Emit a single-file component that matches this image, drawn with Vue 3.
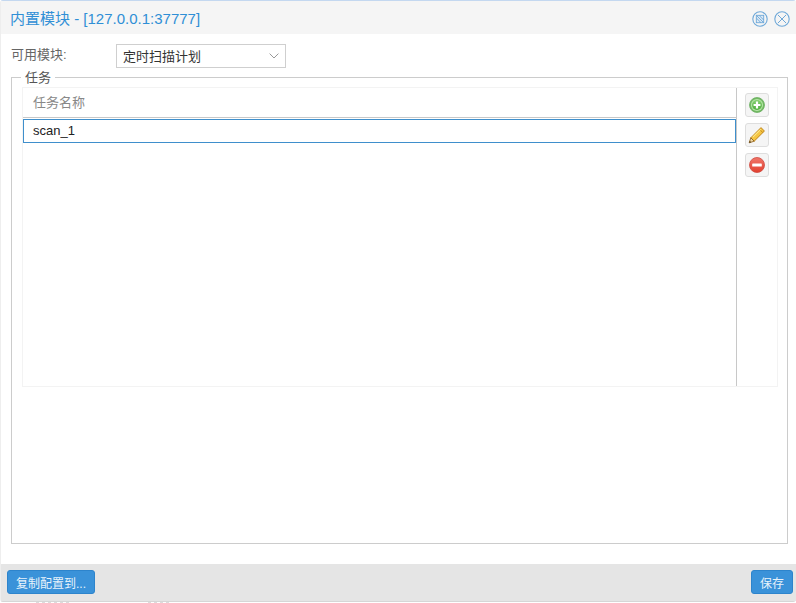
<script setup>
const title = '内置模块 - [127.0.0.1:37777]'
</script>

<template>
  <div class="page">
    <div class="window">
      <header class="head">
        <span class="title">{{ title }}</span>
        <span class="tools">
          <svg class="tool" viewBox="0 0 16 16" width="16" height="16">
            <circle cx="8" cy="8" r="7.2" fill="none" stroke="#6ea8d8" stroke-width="1.1" />
            <rect x="4.3" y="4.3" width="7.4" height="7.4" fill="#dbe9f6" stroke="#6ea8d8" stroke-width="0.9" />
            <path d="M4.3 4.3 11.7 11.7M7 4.3 11.7 9M4.3 7 9 11.7" stroke="#6ea8d8" stroke-width="0.9" fill="none" />
          </svg>
          <svg class="tool" viewBox="0 0 16 16" width="16" height="16">
            <circle cx="8" cy="8" r="7.2" fill="none" stroke="#6ea8d8" stroke-width="1.1" />
            <path d="M3.9 3.9 12.1 12.1M12.1 3.9 3.9 12.1" stroke="#6ea8d8" stroke-width="1" fill="none" />
          </svg>
        </span>
      </header>

      <main class="body">
        <div class="form-row">
          <label class="label">可用模块:</label>
          <div class="select">
            <span>定时扫描计划</span>
            <svg class="chevron" viewBox="0 0 10 6" width="10" height="6"><path d="M.6.6 5 5 9.4.6" fill="none" stroke="#999" stroke-width="1" /></svg>
          </div>
        </div>

        <section class="fieldset">
          <span class="legend">任务</span>
          <div class="grid">
            <div class="grid-main">
              <div class="grid-head">任务名称</div>
              <div class="grid-row">scan_1</div>
            </div>
            <div class="grid-side">
              <button class="icon-btn">
                <svg viewBox="0 0 16 16" width="16" height="16">
                  <defs>
                    <linearGradient id="g-add" x1="0" y1="0" x2="0" y2="1">
                      <stop offset="0" stop-color="#86d073" />
                      <stop offset="1" stop-color="#4fae3e" />
                    </linearGradient>
                  </defs>
                  <circle cx="8" cy="8" r="7.5" fill="#74bb66" stroke="#62a956" stroke-width="0.7" />
                  <circle cx="8" cy="8" r="6" fill="#b8e6a9" />
                  <circle cx="8" cy="8" r="5" fill="url(#g-add)" />
                  <path d="M8 4.6v6.8M4.6 8h6.8" stroke="#fff" stroke-width="2.2" />
                </svg>
              </button>
              <button class="icon-btn">
                <svg viewBox="0 0 18 18" width="18" height="18">
                  <path d="M13 1.6 16.4 5 6.2 15.2 2.8 11.8Z" fill="#f5c542" stroke="#b97a12" stroke-width="0.9" />
                  <path d="M2.8 11.8 1.2 16.8 6.2 15.2Z" fill="#f0d9a8" stroke="#8a5a10" stroke-width="0.8" />
                  <path d="M1.2 16.8 1.8 14.8 3.2 16.2Z" fill="#4a3310" />
                  <path d="M11.4 3.2 14.8 6.6" stroke="#b97a12" stroke-width="0.8" />
                  <path d="M12.8 3.2 4.8 11.2" stroke="#fbe78d" stroke-width="1.1" />
                </svg>
              </button>
              <button class="icon-btn">
                <svg viewBox="0 0 16 16" width="16" height="16">
                  <defs>
                    <linearGradient id="g-del" x1="0" y1="0" x2="0" y2="1">
                      <stop offset="0" stop-color="#f0766a" />
                      <stop offset="1" stop-color="#e2402f" />
                    </linearGradient>
                  </defs>
                  <circle cx="8" cy="8" r="7.5" fill="url(#g-del)" stroke="#cf4a40" stroke-width="0.8" />
                  <rect x="3.2" y="6.4" width="9.6" height="3.2" rx="0.6" fill="#fff" />
                </svg>
              </button>
            </div>
          </div>
        </section>
      </main>

      <footer class="foot">
        <button class="btn">复制配置到...</button>
        <button class="btn">保存</button>
      </footer>
    </div>
    <div class="under">
      <span class="speck speck-a"></span>
      <span class="speck speck-b"></span>
    </div>
  </div>
</template>

<style scoped>
.page {
  width: 796px;
  height: 603px;
  overflow: hidden;
  background: #fff;
  font-family: "Liberation Sans", "Noto Sans CJK SC", sans-serif;
  font-size: 13px;
}
.window {
  height: 602px;
  box-sizing: border-box;
  display: flex;
  flex-direction: column;
  border-top: 1px solid #c4d8f0;
  border-left: 1px solid #eeeeee;
  border-bottom: 1px solid #d6d6d6;
  border-radius: 3px;
}
.head {
  height: 33px;
  flex: none;
  box-sizing: border-box;
  background: #f5f5f5;
  display: flex;
  align-items: center;
  justify-content: space-between;
  padding: 2px 6px 0 9px;
}
.title {
  color: #2f8fd6;
  font-size: 15px;
  margin-top: -2px;
}
.tools {
  display: flex;
  gap: 6px;
}
.tool {
  display: block;
}
.body {
  flex: 1;
  display: flex;
  flex-direction: column;
  box-sizing: border-box;
  padding: 10px 8px 20px 10px;
  min-height: 0;
}
.form-row {
  display: flex;
  align-items: center;
  height: 24px;
  flex: none;
}
.label {
  width: 105px;
  color: #666;
  line-height: 22px;
  margin-top: -2px;
}
.select {
  width: 170px;
  height: 24px;
  box-sizing: border-box;
  border: 1px solid #cfcfcf;
  display: flex;
  align-items: center;
  justify-content: space-between;
  padding: 0 6px 2px;
  color: #333;
}
.chevron {
  margin: 2px 0 0;
}
.fieldset {
  position: relative;
  flex: 1;
  margin-top: 9px;
  border: 1px solid #cccccc;
  padding: 9px 9px 156px 10px;
  display: flex;
  min-height: 0;
}
.legend {
  position: absolute;
  top: -8px;
  left: 9px;
  padding: 0 4px;
  background: #fff;
  color: #555;
  line-height: 16px;
}
.grid {
  flex: 1;
  display: flex;
  border: 1px solid #f3f3f3;
}
.grid-main {
  flex: 1;
  border-right: 1px solid #c8c8c8;
}
.grid-head {
  height: 30px;
  box-sizing: border-box;
  border-bottom: 1px solid #c8c8c8;
  color: #888;
  padding-left: 10px;
  line-height: 29px;
}
.grid-row {
  height: 24px;
  box-sizing: border-box;
  margin-top: 1px;
  border: 1px solid #3f8fcc;
  padding-left: 9px;
  line-height: 22px;
  color: #222;
}
.grid-side {
  width: 40px;
  flex: none;
  box-sizing: border-box;
  padding: 5px 8px 0;
  display: flex;
  flex-direction: column;
  gap: 6px;
}
.icon-btn {
  width: 24px;
  height: 24px;
  padding: 0;
  box-sizing: border-box;
  border: 1px solid #dedede;
  border-radius: 3px;
  background: #f5f5f5;
  display: flex;
  align-items: center;
  justify-content: center;
}
.foot {
  height: 37px;
  flex: none;
  box-sizing: border-box;
  background: #e5e5e5;
  display: flex;
  align-items: flex-start;
  justify-content: space-between;
  padding: 6px 3px 0 6px;
}
.btn {
  height: 24px;
  box-sizing: border-box;
  padding: 0 8px;
  border: 1px solid #2d84cc;
  border-radius: 3px;
  background: #3a92d9;
  color: #e8f2fb;
  font-family: inherit;
  font-size: 12px;
}
.under {
  height: 1px;
  display: flex;
}
.speck {
  height: 1px;
  background: repeating-linear-gradient(90deg, #dcdcdc 0 3px, #fff 3px 6px);
}
.speck-a {
  width: 36px;
  margin-left: 36px;
}
.speck-b {
  width: 24px;
  margin-left: 76px;
}
</style>

<style>
html, body { margin: 0; background: #fff; }
</style>
